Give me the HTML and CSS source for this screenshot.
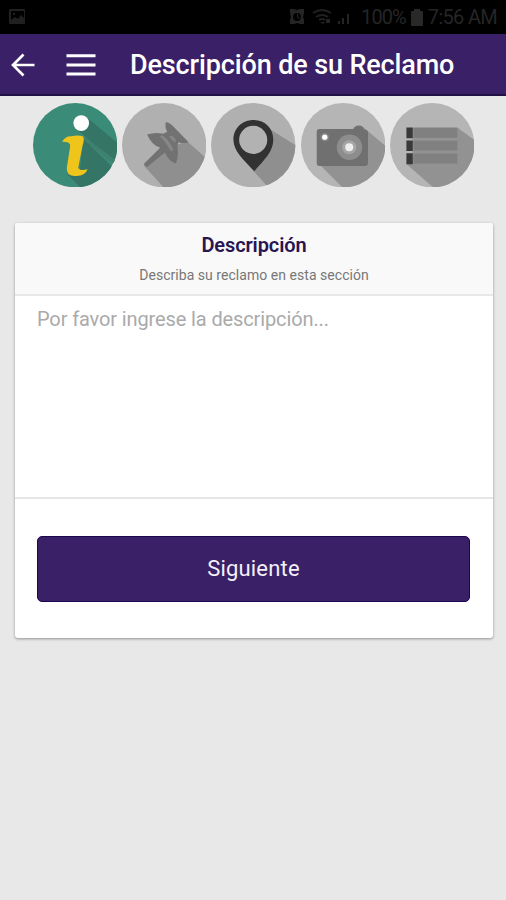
FILE: index.html
```html
<!DOCTYPE html>
<html lang="es">
<head>
<meta charset="utf-8">
<title>Descripción de su Reclamo</title>
<link rel="stylesheet" href="styles.css">
</head>
<body>
<div class="status">
  <svg class="status-picture" viewBox="0 0 18 18"><path fill="#202020" fill-rule="evenodd" d="M2 1h14q1 0 1 1v13q0 1-1 1H2q-1 0-1-1V2q0-1 1-1zm1 2v9l4-3 3 2 3-4 3 3V3zm2 2h2v2H5z"/></svg>
  <div class="status-right">
    <svg class="status-icons" viewBox="0 0 52 20"><path fill="#252525" fill-rule="evenodd" d="M1 2h4l3 1 3-1h4v4l-1 4 1 3v4h-4l-3-1-3 1H1v-4l1-3-1-4zm7 4a4 4 0 1 0 0 8 4 4 0 0 0 0-8zM8 7h1v3l2 1-1 1-2-2z"/><path d="M24 6q9-6 18 0M27 10q6-4 12 0M30 13q3-2 6 0" fill="none" stroke="#202020" stroke-width="2"/><path fill="#242424" d="M31 15h5l-2 2zM37 12h4v4h-4zM49 14h2v3h-2zM53 11h2v6h-2zM58 7h2v10h-2z"/></svg>
    <span class="status-percent">100%</span>
    <svg class="battery" viewBox="0 0 12 17"><path fill="#292929" d="M3 0h6v2h2q1 0 1 1v13q0 1-1 1H1q-1 0-1-1V3q0-1 1-1h2z"/></svg>
    <span class="status-time">7:56 AM</span>
  </div>
</div>
<header class="bar">
  <svg class="back" viewBox="0 0 24 24"><path d="M23.500 12H2M12.500 1.500 2 12l10.500 10.500" fill="none" stroke="#fff" stroke-width="2.700"/></svg>
  <svg class="menu" viewBox="0 0 30 22"><path d="M.5 1.700h29M.5 11h29M.5 20h29" stroke="#fff" stroke-width="2.900"/></svg>
  <h1>Descripción de su Reclamo</h1>
</header>
<main>
  <nav class="steps">
    <svg viewBox="23 20 252 252">
      <clipPath id="disc"><circle cx="149" cy="146" r="126"/></clipPath>
      <g clip-path="url(#disc)"><path fill="#3a8b77" d="M0 0h300v300H0z"/><path fill="#347565" d="M181 61 300 160v72L176 117l-27-20zM173 127l120 115-80 80-86-88 35-5z"/><path fill="#40806f" d="m176 121 95 71-5 10-93-73z"/></g>
      <circle cx="167" cy="80" r="23.500" fill="#fff"/>
      <path fill="#efc51b" d="M110 136q8-18 29-17 17-5 34 1 4 10-2 27l-13 66q4 11 28 5-8 22-38 20-26-1-24-25l10-64q1-14-24-13z"/>
    </svg>
    <svg viewBox="23 20 252 252">
      <g clip-path="url(#disc)"><path fill="#b0b0b0" d="M0 0h300v300H0z"/><path fill="#8f8f8f" d="m217 134 90 80-90 100-68-40-61-67 47-43z"/></g>
      <path fill="#727272" d="M154 77q14 3 28 19l40 41q-16 5-31 0-4 12-1 30 1 17-6 34-22-7-33-33l-54 44-9-10 49-48q-26-9-39-40 25-8 48-2l12-6q-8-14-4-29z"/>
      <path fill="#878787" d="M163 118q14 0 20 10v10q-12-4-20-20zM143 116q20 12 34 45l-8 3q-13-26-33-45z"/>
    </svg>
    <svg viewBox="23 20 252 252">
      <g clip-path="url(#disc)"><path fill="#b0b0b0" d="M0 0h300v300H0z"/><path fill="#8f8f8f" d="m198 98 120 75-80 147-88-97z"/></g>
      <path fill="#323232" d="M150 71c34 0 59 25 59 58 0 37-27 60-57 95-30-34-62-58-62-95 0-33 26-58 60-58z"/><circle cx="149" cy="130" r="42" fill="#b2b2b2"/>
    </svg>
    <svg viewBox="23 20 252 252">
      <g clip-path="url(#disc)"><path fill="#b5b5b5" d="M0 0h300v300H0z"/><path fill="#929292" d="m207 91 110 92-80 180L74 199z"/></g>
      <path fill="#707070" d="M78 98h101q4-11 17-11t15 12q12 0 12 9v91q0 9-9 9H78q-8 0-8-8v-94q0-8 8-8z"/><circle cx="168" cy="152" r="38" fill="#8d8d8d"/><circle cx="167" cy="152" r="21" fill="#a5a5a5"/><circle cx="167" cy="152" r="12" fill="#eee"/><circle cx="94" cy="122" r="13" fill="#838383"/><circle cx="94" cy="122" r="8" fill="#fff"/>
    </svg>
    <svg viewBox="23 20 252 252">
      <g clip-path="url(#disc)"><path fill="#b5b5b5" d="M0 0h300v300H0z"/><path fill="#929292" d="m225 94 95 70-80 185L72 202z"/></g>
      <path fill="#939393" d="M90 93h134v110H90z"/><path fill="#808080" d="M93 94h131v30H93zm0 39h131v29H93zm0 38h131v30H93z"/><path fill="#393939" d="M72 93h19v32H72zm0 39h19v31H72zm0 38h19v33H72z"/>
    </svg>
  </nav>
  <section class="card">
    <div class="card-head">
      <h2>Descripción</h2>
      <p>Describa su reclamo en esta sección</p>
    </div>
    <textarea placeholder="Por favor ingrese la descripción..."></textarea>
    <div class="card-foot"><button type="button">Siguiente</button></div>
  </section>
</main>
</body>
</html>
```
FILE: styles.css
```css
* { box-sizing: border-box; }
body {
  margin: 0;
  height: 900px;
  overflow: hidden;
  background: #e8e8e8;
  font-family: Roboto, "Liberation Sans", sans-serif;
}
svg { display: block; flex: none; }
h1, h2, p { margin: 0; white-space: nowrap; }
.status {
  height: 34px;
  background: #000;
  color: #252525;
  display: flex;
  align-items: center;
  justify-content: space-between;
  padding: 0 9px 0 8px;
  font-size: 20px;
}
.status-picture { width: 18px; height: 18px; }
.status-right { display: flex; align-items: center; white-space: nowrap; }
.status-icons { width: 52px; height: 20px; margin-right: 20px; overflow: visible; }
.status-percent { letter-spacing: -.9px; }
.status-time { letter-spacing: -.7px; }
.battery { width: 12px; height: 17px; margin: 0 5px; }
.bar {
  height: 62px;
  display: flex;
  align-items: center;
  padding-left: 11px;
  background: #3a2067;
  border-bottom: 2px solid #211044;
  color: #fff;
}
.back { width: 24px; height: 24px; margin-top: 2px; }
.menu { width: 30px; height: 22px; margin: 2px 0 0 31px; }
h1 { margin: 2px 0 0 34px; font-size: 27px; font-weight: 500; line-height: 32px; letter-spacing: -.13px; }
.steps { display: flex; gap: 5px; padding: 7px 0 0 32.500px; }
.steps svg { width: 84.400px; height: 84.400px; }
.card {
  margin: 36px 13px 0 15px;
  height: 415px;
  background: #fff;
  border-radius: 3px;
  box-shadow: 0 1px 3px rgba(0, 0, 0, .38);
  overflow: hidden;
}
.card-head {
  height: 73px;
  padding-top: 9px;
  background: #f9f9f9;
  border-bottom: 2px solid #e8e8e8;
  text-align: center;
}
h2 { color: #291551; font-size: 20px; line-height: 26px; font-weight: 600; letter-spacing: -.1px; }
.card-head p { margin-top: 7px; color: #777; font-size: 14px; line-height: 20px; letter-spacing: .04px; }
textarea {
  display: block;
  width: 100%;
  height: 203px;
  margin: 0;
  padding: 11px 22px;
  border: 0;
  border-bottom: 2px solid #e5e5e5;
  background: #fff;
  font: 20px/24px Roboto, sans-serif;
  letter-spacing: -.12px;
  resize: none;
}
textarea::placeholder { color: #aaa; opacity: 1; }
.card-foot { padding: 37px 23px 0 22px; }
button {
  display: block;
  width: 100%;
  height: 66px;
  border: 1px solid #1b0750;
  border-radius: 5px;
  background: #3a2067;
  color: #f3f0f7;
  font: 22px/30px Roboto, sans-serif;
  letter-spacing: .2px;
}
```
